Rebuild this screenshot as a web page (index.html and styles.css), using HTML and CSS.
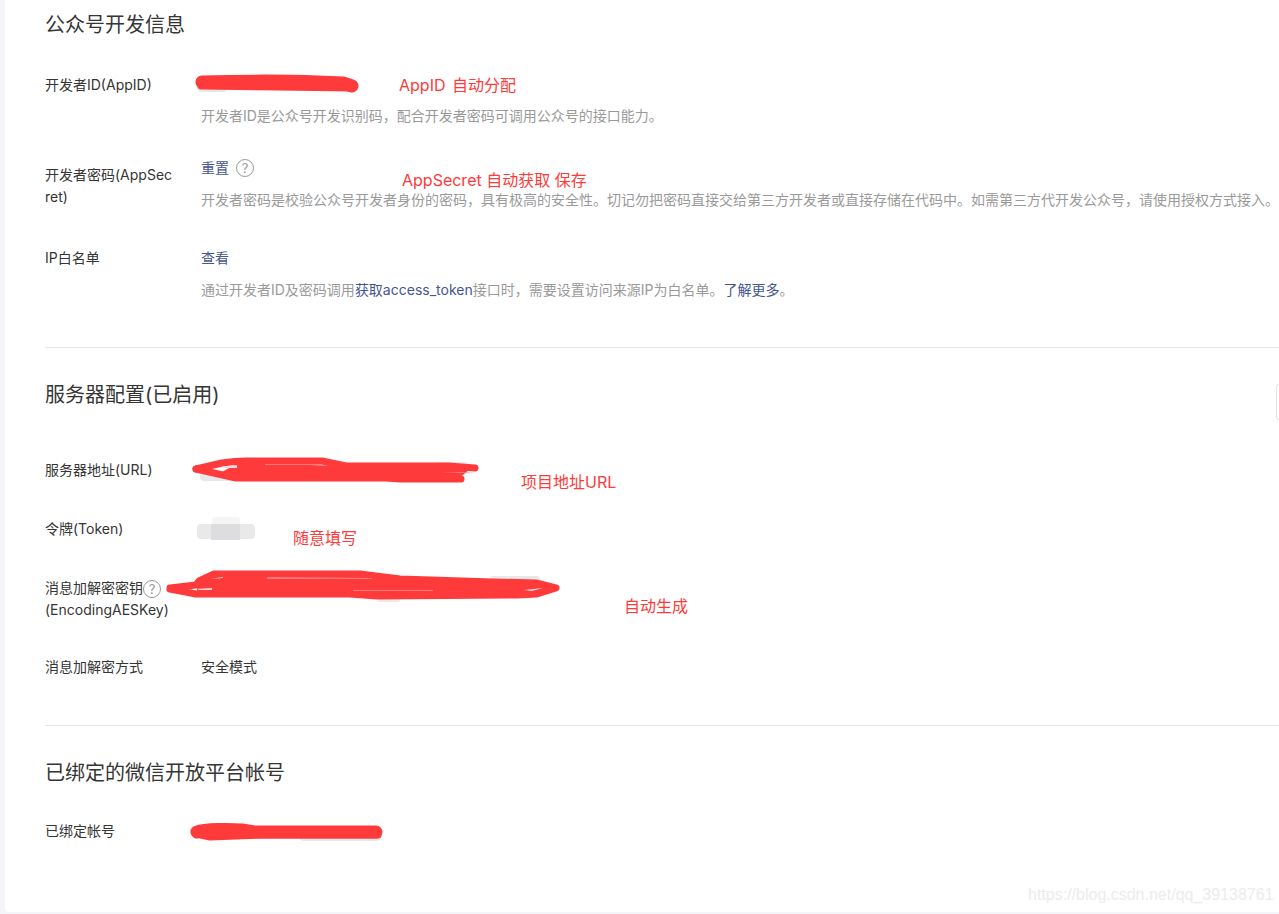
FILE: index.html
```html
<!DOCTYPE html>
<html lang="zh-CN">
<head>
<meta charset="utf-8">
<title>公众号开发信息</title>
<link rel="stylesheet" href="styles.css">
</head>
<body>
<main class="card">
  <section class="section section-dev">
    <h2 class="title">公众号开发信息</h2>
    <div class="row row-appid">
      <div class="label">开发者ID(AppID)</div>
      <div class="body">
        <div class="value">&nbsp;</div>
        <p class="hint">开发者ID是公众号开发识别码，配合开发者密码可调用公众号的接口能力。</p>
      </div>
    </div>
    <div class="row row-secret">
      <div class="label label-low">开发者密码(AppSecret)</div>
      <div class="body">
        <div class="value"><a class="link">重置</a><span class="help help-reset">?</span></div>
        <p class="hint hint-gap">开发者密码是校验公众号开发者身份的密码，具有极高的安全性。切记勿把密码直接交给第三方开发者或直接存储在代码中。如需第三方代开发公众号，请使用授权方式接入。</p>
      </div>
    </div>
    <div class="row row-ip">
      <div class="label">IP白名单</div>
      <div class="body">
        <div class="value"><a class="link">查看</a></div>
        <p class="hint hint-gap">通过开发者ID及密码调用<a class="link">获取access_token</a>接口时，需要设置访问来源IP为白名单。<a class="link">了解更多</a>。</p>
      </div>
    </div>
  </section>

  <section class="section section-server">
    <h2 class="title">服务器配置(已启用)</h2>
    <div class="row row-url">
      <div class="label">服务器地址(URL)</div>
      <div class="body"><div class="value">&nbsp;</div></div>
    </div>
    <div class="row row-token">
      <div class="label">令牌(Token)</div>
      <div class="body"><div class="value">&nbsp;</div></div>
    </div>
    <div class="row row-aes">
      <div class="label label-aes">消息加解密密钥<span class="help help-aes">?</span><br>(EncodingAESKey)</div>
      <div class="body"><div class="value">&nbsp;</div></div>
    </div>
    <div class="row row-mode">
      <div class="label">消息加解密方式</div>
      <div class="body"><div class="value">安全模式</div></div>
    </div>
  </section>

  <section class="section section-bound">
    <h2 class="title">已绑定的微信开放平台帐号</h2>
    <div class="row row-bound">
      <div class="label">已绑定帐号</div>
      <div class="body"><div class="value">&nbsp;</div></div>
    </div>
  </section>
</main>

<div class="side-tab"></div>

<svg class="marks" width="1279" height="914" viewBox="0 0 1279 914" aria-hidden="true">
  <rect class="smudge" x="197" y="84" width="30" height="8" rx="4"/>
  <rect class="smudge" x="200" y="472" width="40" height="9" rx="4"/>
  <rect class="smudge" x="432" y="462" width="36" height="12" rx="4"/>
  <rect class="smudge" x="490" y="576" width="50" height="7" rx="3"/>
  <rect class="smudge" x="378" y="596" width="22" height="6" rx="2"/>
  <rect class="smudge" x="190" y="826" width="10" height="8" rx="3"/>
  <rect class="smudge" x="300" y="834" width="80" height="7" rx="3"/>

  <rect class="blur-top" x="212" y="517" width="28" height="8" rx="3"/>
  <rect class="blur-side" x="197" y="524" width="58" height="15" rx="4"/>
  <rect class="blur-mid" x="211" y="524" width="29" height="16"/>

  <path class="ink-fill" d="M204 77 L318 77 L345 80 L354 86 L352 89 L300 88 L204 87 Z"/>
  <path class="ink-wide" d="M202 82 C240 81 290 81 318 82 L343 83 L352 86"/>
  <path class="ink" d="M201 86 C250 87 310 87 352 88"/>

  <path class="ink-fill" d="M238 463 L346 466 L470 469 L458 479 L236 479 L222 472 Z"/>
  <path class="ink" d="M196 469 L222 463 Q235 461 246 461 L322 461 L346 466 L448 466 L475 468"/>
  <path class="ink" d="M196 469 L236 478 L385 478 L400 479 L461 479"/>
  <path class="gap" d="M218 468 L237 465 L237 468 Z"/>
  <path class="gap-faint" d="M265 464 L322 464 L322 465 L265 465 Z"/>
  <path class="gap-faint" d="M440 472 L476 472 L460 473 Z"/>

  <path class="ink-fill" d="M197 584 L214 576 L360 575 L400 579 L537 583 L556 588 L537 594 L350 594 L197 594 Z"/>
  <path class="ink" d="M170 588 L196 585 L199 581 L214 574 L360 574 L400 579 L493 582 L536 583 L556 588 L537 594 L517 595 L377 596 L350 594 L196 594 L170 589"/>
  <path class="gap" d="M196 589 L212 588 L212 590 L200 590 Z"/>
  <path class="gap" d="M210 579 L223 577 L223 578 Z"/>
  <path class="gap-faint" d="M267 577 L372 578 L372 579 L267 579 Z"/>
  <path class="gap" d="M524 590 L543 588 L532 591 Z"/>
  <path class="gap-faint" d="M353 590 L433 590 L433 591 L353 591 Z"/>

  <path class="ink-wide" d="M197 832 C205 829 230 829 242 830 L254 832 L376 832"/>
  <path class="ink" d="M196 834 L210 837 L262 835 L378 835"/>
</svg>

<span class="note note-appid">AppID 自动分配</span>
<span class="note note-secret">AppSecret 自动获取 保存</span>
<span class="note note-url">项目地址URL</span>
<span class="note note-token">随意填写</span>
<span class="note note-aes">自动生成</span>
<span class="watermark">https://blog.csdn.net/qq_39138761</span>
</body>
</html>
```

FILE: styles.css
```css
* { box-sizing: border-box; }

html, body { margin: 0; height: 914px; overflow: hidden; }

body {
  position: relative;
  background: #f3f5f9;
  font-family: "Inter", "Noto Sans CJK SC", sans-serif;
  font-size: 14px;
  line-height: 22px;
  color: #353535;
}

.card {
  margin-left: 5px;
  height: 912px;
  padding-left: 40px;
  background: #fff;
  border-bottom-left-radius: 4px;
  overflow: hidden;
}

.section { border-bottom: 1px solid #e7e7eb; }
.section:last-child { border-bottom: 0; }

.section-dev { height: 348px; padding-top: 11px; }
.section-server { height: 378px; padding-top: 33px; }
.section-bound { padding-top: 33px; }

.title {
  margin: 0;
  height: 28px;
  font-size: 20px;
  font-weight: 400;
  line-height: 28px;
  color: #353535;
}

.row { display: grid; grid-template-columns: 156px 1fr; }

.label { width: 128px; word-break: break-all; }
.label-low { padding-top: 7px; }
.label-aes { width: 156px; }

.value { height: 22px; display: flex; align-items: center; }

.hint { margin: 9px 0 0; color: #9a9a9a; white-space: nowrap; }
.hint-gap { margin-top: 10px; }

.link { color: #44568f; text-decoration: none; }

.help {
  display: inline-flex;
  align-items: center;
  justify-content: center;
  width: 18px;
  height: 18px;
  border: 1px solid #9a9a9a;
  border-radius: 50%;
  color: #9a9a9a;
  font-size: 13px;
  line-height: 16px;
}

.help-reset { margin-left: 7px; }
.help-aes { vertical-align: middle; }

.row-appid { margin-top: 35px; }
.row-secret { margin-top: 30px; }
.row-ip { margin-top: 36px; }

.row-url { margin-top: 50px; }
.row-token { margin-top: 37px; }
.row-aes { margin-top: 37px; }
.row-mode { margin-top: 35px; }

.row-bound { margin-top: 33px; }

.side-tab {
  position: absolute;
  right: -4px;
  top: 384px;
  width: 7px;
  height: 36px;
  background: #fff;
  border: 1px solid #e4e4e7;
  border-radius: 3px;
}

.marks { position: absolute; left: 0; top: 0; pointer-events: none; }
.ink, .ink-wide { fill: none; stroke: #ff3a3a; stroke-linecap: round; stroke-linejoin: round; }
.ink { stroke-width: 7; }
.ink-wide { stroke-width: 13; }
.ink-fill { fill: #ff3a3a; }
.gap { fill: #ffd9d9; }
.gap-faint { fill: #ff7a7a; }
.smudge { fill: #e8e8ea; }
.blur-top { fill: #f5f5f5; }
.blur-side { fill: #e9e9e9; }
.blur-mid { fill: #dddde0; }

.note {
  position: absolute;
  font-size: 16px;
  line-height: 22px;
  white-space: nowrap;
  color: #ff3a3a;
}
.note-appid { left: 399px; top: 74px; word-spacing: 2px; }
.note-secret { left: 402px; top: 169px; }
.note-url { left: 521px; top: 471px; }
.note-token { left: 293px; top: 527px; }
.note-aes { left: 624px; top: 595px; }

.watermark {
  position: absolute;
  left: 1028px;
  top: 885px;
  font-family: "Liberation Sans", sans-serif;
  font-size: 16px;
  line-height: 20px;
  white-space: nowrap;
  color: #ececec;
}
```
